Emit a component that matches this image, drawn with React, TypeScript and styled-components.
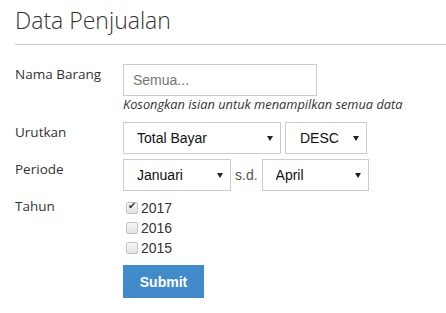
import styled, { createGlobalStyle } from 'styled-components';

const years = [
  { value: '2017', checked: true },
  { value: '2016', checked: false },
  { value: '2015', checked: false },
];

export default function App() {
  return (
    <>
      <GlobalStyle />
      <StyledPage>
        <StyledHeader>
          <h2>Data Penjualan</h2>
        </StyledHeader>

        <StyledForm onSubmit={(e) => e.preventDefault()}>
          <StyledRow $spaceAfter={4}>
            <StyledLabel htmlFor="nama">Nama Barang</StyledLabel>
            <div>
              <StyledInput id="nama" type="text" placeholder="Semua..." $width={194} />
              <StyledHelp>Kosongkan isian untuk menampilkan semua data</StyledHelp>
            </div>
          </StyledRow>

          <StyledRow>
            <StyledLabel htmlFor="urut">Urutkan</StyledLabel>
            <StyledControls>
              <SelectBox id="urut" width={158} options={['Total Bayar', 'Nama Barang', 'Jumlah']} />
              <SelectBox width={82} pad={14} options={['DESC', 'ASC']} />
            </StyledControls>
          </StyledRow>

          <StyledRow>
            <StyledLabel htmlFor="periode">Periode</StyledLabel>
            <StyledControls>
              <SelectBox id="periode" width={108} options={['Januari', 'Februari', 'Maret', 'April']} />
              <StyledSeparator>s.d.</StyledSeparator>
              <SelectBox width={107} defaultValue="April" options={['Januari', 'Februari', 'Maret', 'April']} />
            </StyledControls>
          </StyledRow>

          <StyledRow>
            <StyledLabel as="span">Tahun</StyledLabel>
            <div>
              <StyledChecks>
                {years.map((y) => (
                  <label key={y.value}>
                    <input type="checkbox" defaultChecked={y.checked} />
                    {y.value}
                  </label>
                ))}
              </StyledChecks>
              <StyledButton type="submit">Submit</StyledButton>
            </div>
          </StyledRow>
        </StyledForm>
      </StyledPage>
    </>
  );
}

type SelectBoxProps = {
  id?: string;
  width: number;
  pad?: number;
  options: string[];
  defaultValue?: string;
};

function SelectBox({ id, width, pad = 13, options, defaultValue }: SelectBoxProps) {
  return (
    <StyledSelectWrap $width={width}>
      <StyledSelect id={id} defaultValue={defaultValue} $pad={pad}>
        {options.map((o) => (
          <option key={o}>{o}</option>
        ))}
      </StyledSelect>
      <StyledArrow />
    </StyledSelectWrap>
  );
}

const GlobalStyle = createGlobalStyle`
  html, body {
    margin: 0;
    padding: 0;
    background: #fff;
  }
  body {
    font-family: "Open Sans", "Liberation Sans", sans-serif;
    color: #333;
  }
`;

const StyledPage = styled.div`
  width: 446px;
  height: 313px;
  overflow: hidden;
  padding-left: 15px;
  box-sizing: border-box;
`;

const StyledHeader = styled.div`
  padding-top: 5px;
  padding-bottom: 9px;
  border-bottom: 1px solid #cccccc;

  h2 {
    margin: 0;
    font-family: "Open Sans", sans-serif;
    font-weight: 300;
    font-size: 23px;
    line-height: 30px;
    color: #333;
  }
`;

const StyledForm = styled.form`
  margin-top: 19px;
  display: flex;
  flex-direction: column;
  gap: 5px;
`;

const StyledRow = styled.div<{ $spaceAfter?: number }>`
  display: grid;
  grid-template-columns: 108px auto;
  align-items: start;
  padding-bottom: ${(p) => p.$spaceAfter || 0}px;
`;

const StyledLabel = styled.label`
  font-family: "Open Sans", sans-serif;
  font-size: 13.5px;
  line-height: 20px;
  color: #333;
`;

const StyledInput = styled.input<{ $width: number }>`
  display: block;
  box-sizing: border-box;
  width: ${(p) => p.$width}px;
  height: 32px;
  margin: 0;
  padding: 0 9px;
  border: 1px solid #cccccc;
  border-radius: 0;
  outline: none;
  font-family: "Liberation Sans", Arial, sans-serif;
  font-size: 14px;
  color: #222;

  ::placeholder {
    color: #a9a9a9;
  }
`;

const StyledHelp = styled.div`
  font-family: "Open Sans", sans-serif;
  font-style: italic;
  font-size: 12.8px;
  line-height: 17px;
  color: #333;
`;

const StyledControls = styled.div`
  display: flex;
  align-items: center;
  gap: 4px;
`;

const StyledSelectWrap = styled.div<{ $width: number }>`
  position: relative;
  width: ${(p) => p.$width}px;
  height: 32px;
`;

const StyledSelect = styled.select<{ $pad: number }>`
  appearance: none;
  -webkit-appearance: none;
  box-sizing: border-box;
  width: 100%;
  height: 100%;
  margin: 0;
  padding: 0 20px 0 ${(p) => p.$pad}px;
  border: 1px solid #cccccc;
  border-radius: 0;
  background: #fff;
  outline: none;
  font-family: "Liberation Sans", Arial, sans-serif;
  font-size: 14px;
  color: #111;
`;

const StyledArrow = styled.span`
  position: absolute;
  right: 8px;
  top: 14px;
  width: 0;
  height: 0;
  border-left: 3px solid transparent;
  border-right: 3px solid transparent;
  border-top: 5px solid #222;
  pointer-events: none;
`;

const StyledSeparator = styled.span`
  font-family: "Liberation Sans", Arial, sans-serif;
  font-size: 14px;
  color: #555;
`;

const StyledChecks = styled.div`
  display: flex;
  flex-direction: column;
  padding-top: 2px;

  label {
    display: flex;
    align-items: center;
    height: 20px;
    font-family: "Liberation Sans", Arial, sans-serif;
    font-size: 14px;
    color: #333;
  }

  input {
    appearance: none;
    -webkit-appearance: none;
    box-sizing: border-box;
    width: 12px;
    height: 12px;
    margin: 0 3px 0 3px;
    border: 1px solid #c2c2c2;
    border-radius: 2px;
    background: linear-gradient(#f8f8f8, #e2e2e2);
    position: relative;
  }

  input:checked::after {
    content: '✔';
    position: absolute;
    left: 1px;
    top: -3px;
    font-size: 10px;
    color: #333;
  }
`;

const StyledButton = styled.button`
  display: block;
  width: 81px;
  height: 33px;
  margin-top: 7px;
  border: none;
  border-radius: 0;
  background: #428bca;
  color: #fff;
  font-family: "Liberation Sans", Arial, sans-serif;
  font-weight: bold;
  font-size: 14px;
  cursor: pointer;
`;
